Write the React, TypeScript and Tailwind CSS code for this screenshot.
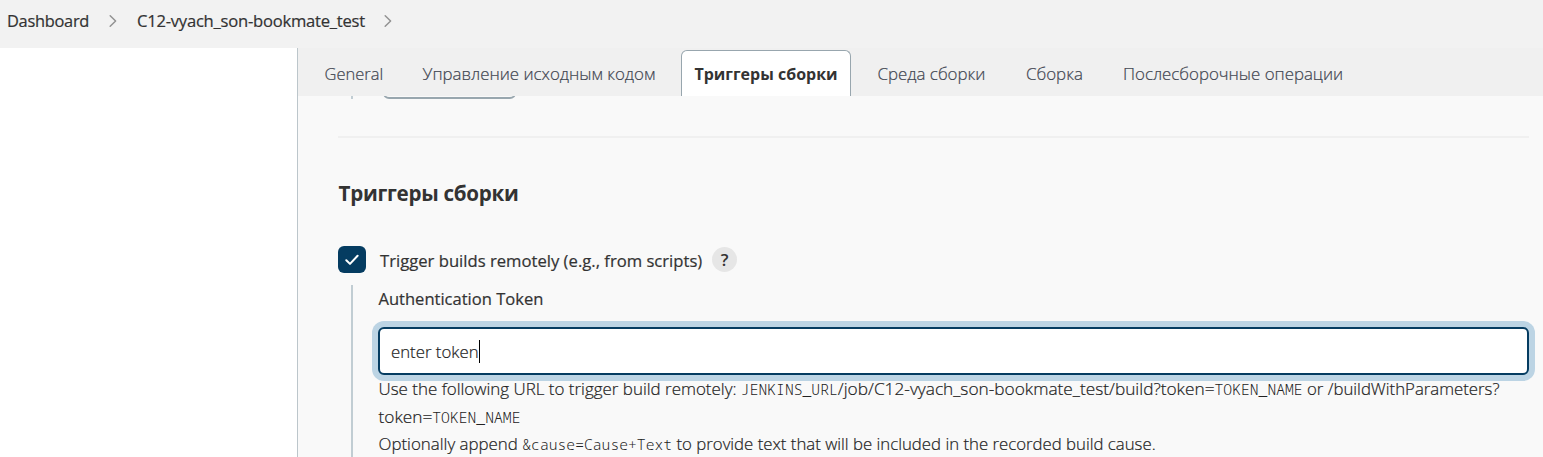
import type { ReactNode } from 'react';

function Chevron({ className }: { className: string }) {
  return (
    <svg viewBox="0 0 8 14" className={`h-[14px] w-2 shrink-0 ${className}`} fill="none" stroke="#929292" strokeWidth="1.5" strokeLinecap="round" strokeLinejoin="round">
      <path d="M1.2 1.8 6.6 7 1.2 12.2" />
    </svg>
  );
}

function Breadcrumbs() {
  return (
    <header className="flex h-12 shrink-0 items-start bg-[#f2f2f2] pl-[7px] pt-[9px] leading-6 [-webkit-text-stroke:0.2px]">
      <a className="w-[102px] text-[16.4px] tracking-[-0.28px]">Dashboard</a>
      <Chevron className="mt-[5px]" />
      <a className="ml-[20px] w-[247px] whitespace-nowrap text-[16.6px] tracking-[-0.24px]">C12-vyach_son-bookmate_test</a>
      <Chevron className="mt-[5px]" />
    </header>
  );
}

function Tab({ className, children }: { className: string; children: ReactNode }) {
  return <a className={`whitespace-nowrap pt-px font-light text-[#3f4550] [-webkit-text-stroke:0.2px] ${className}`}>{children}</a>;
}

function TabBar() {
  return (
    <nav className="flex h-12 shrink-0 items-start bg-[#f0f0f0] pt-[2px] leading-[46px]">
      <Tab className="ml-[26px] w-[98px] pl-[0.5px] text-[16.5px]">General</Tab>
      <Tab className="w-[259px] pl-[0.5px] text-[16.85px]">Управление исходным кодом</Tab>
      <a className="flex h-[46px] w-[170px] justify-center whitespace-nowrap rounded-t-md border border-b-0 border-[#98a6ae] bg-white text-[16px] font-bold">
        Триггеры сборки
      </a>
      <Tab className="ml-[26px] w-[148px] pl-[0.5px] text-[16.9px]">Среда сборки</Tab>
      <Tab className="w-[98px] pl-px text-[16.9px]">Сборка</Tab>
      <Tab className="text-[16.85px]">Послесборочные операции</Tab>
    </nav>
  );
}

function Code({ children }: { children: ReactNode }) {
  return <code className="font-['Noto_Sans_Mono','DejaVu_Sans_Mono',monospace] text-[14.65px] tracking-[0.03px] [-webkit-text-stroke:0px]">{children}</code>;
}

function TokenHelp() {
  return (
    <div className="whitespace-pre pl-[0.5px] text-[16.78px] font-light text-[#222] [-webkit-text-stroke:0.2px]">
      <div className="h-7 leading-7">
        <span className="text-[16.95px]">Use the following URL to trigger build remotely: </span>
        <Code>JENKINS_URL</Code>
        <span className="text-[17.28px]">/job/C12-vyach_son-bookmate_test/build?token=</span>
        <Code>TOKEN_NAME</Code> or /buildWithParameters?
      </div>
      <div className="h-[27px] leading-7">
        <span className="text-[17.28px]">token=</span>
        <Code>TOKEN_NAME</Code>
      </div>
      <div className="h-7 leading-7">
        <span className="text-[16.9px]">Optionally append </span>
        <Code>&amp;cause=Cause+Text</Code> to provide text that will be included in the recorded build cause.
      </div>
    </div>
  );
}

export default function App() {
  return (
    <div className="flex h-[457px] flex-col overflow-hidden bg-white font-['Open_Sans',sans-serif] text-[#333]">
      <Breadcrumbs />
      <div className="flex min-h-0 flex-1">
        <aside className="w-[297px] shrink-0 bg-white" />
        <main className="flex min-w-0 flex-1 flex-col border-l border-[#bcc6cb] bg-[#f9f9f9]">
          <TabBar />
          <div className="flex min-h-0 flex-1 flex-col overflow-hidden pl-[40px] pr-[14px]">
            <div className="flex h-[40px] shrink-0 items-start">
              <div className="ml-[13px] h-[3px] w-[2px] bg-[#c1cdd3]" />
              <div className="ml-[30px] h-[3px] w-[133px] overflow-hidden">
                <div className="-mt-5 h-[23px] rounded-md border-2 border-[#98a6ae]" />
              </div>
            </div>
            <hr className="h-[2px] shrink-0 border-0 bg-[#f0f0f0]" />
            <h2 className="mt-[39px] h-8 shrink-0 pl-[0.5px] text-[20.6px] font-bold leading-[33px] tracking-[-0.28px]">Триггеры сборки</h2>
            <div className="mt-[37px] flex h-[27px] shrink-0 items-center">
              <div className="flex h-[27px] w-7 items-center justify-center rounded-md bg-[#053c61]">
                <svg viewBox="0 0 14 12" className="h-3 w-[14px]" fill="none" stroke="white" strokeWidth="2" strokeLinecap="round" strokeLinejoin="round">
                  <path d="M1.3 6.2 5 9.9 12.6 1.8" />
                </svg>
              </div>
              <label className="ml-[14px] mt-[3px] w-[332px] whitespace-nowrap text-[16.65px] [-webkit-text-stroke:0.2px]">Trigger builds remotely (e.g., from scripts)</label>
              <button className="flex size-[25px] items-center justify-center rounded-full bg-[#e6e6e6] text-[17px] font-semibold">?</button>
            </div>
            <div className="ml-[13px] mt-3 h-[180px] shrink-0 border-l-2 border-[#c1cdd3] pl-[25px]">
              <div className="h-[42px] pl-[0.5px] text-[16.55px] leading-7 [-webkit-text-stroke:0.2px]">Authentication Token</div>
              <div className="flex h-12 items-center rounded-md border-2 border-[#053c61] bg-white pl-[11px] text-[16.8px] font-light text-[#222] ring-6 ring-[#bcd4e4] [-webkit-text-stroke:0.2px]">
                <span className="pt-[2px]">enter token</span>
                <span className="h-[23px] w-px bg-black" />
              </div>
              <TokenHelp />
            </div>
          </div>
        </main>
      </div>
    </div>
  );
}
